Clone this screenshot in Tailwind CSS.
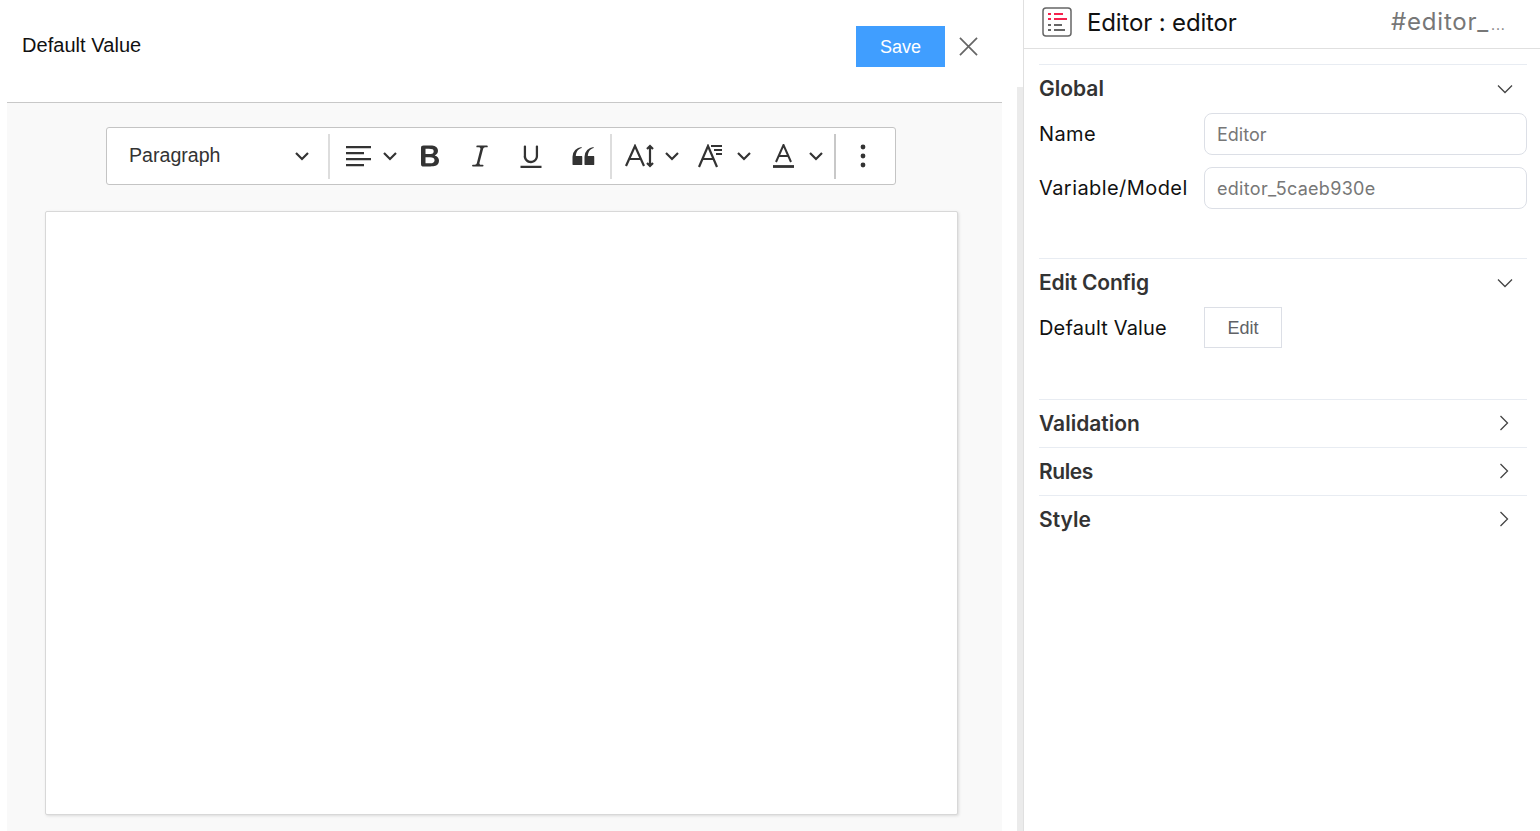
<!DOCTYPE html>
<html lang="en">
<head>
    <meta charset="UTF-8">
    <title>Default Value</title>
    <script src="https://cdn.jsdelivr.net/npm/@tailwindcss/browser@4"></script>
</head>
<body class="bg-white overflow-hidden">
<div class="flex h-[831px] w-[1540px] overflow-hidden">
    <!-- dialog -->
    <div class="w-[995px] ml-[7px] shrink-0 flex flex-col font-['Liberation_Sans',Arial,sans-serif]">
        <div class="h-[103px] shrink-0 border-b border-[#c8c8c8] flex items-start">
            <div class="ml-[15px] mt-[33px] text-[20px] leading-[24px] text-[#111] tracking-[0.05px]">Default Value</div>
            <button class="ml-auto mt-[26px] w-[89px] h-[41px] pt-[1px] bg-[#409eff] text-white text-[18px] flex items-center justify-center">Save</button>
            <svg class="mt-[37px] ml-[14px] mr-[24px]" width="19" height="19" viewBox="0 0 20 20" fill="none" stroke="#666" stroke-width="1.8"><path d="M1 1l18 18M19 1L1 19"/></svg>
        </div>
        <div class="flex-1 bg-[#f9f9f9] flex flex-col">
            <!-- toolbar -->
            <div class="ml-[99px] mt-[24px] w-[790px] h-[58px] bg-white border border-[#c4c4c4] rounded-[3px] flex items-center text-[#333]">
                <span class="ml-[22px] -mt-[1px] w-[166px] text-[19.6px] text-[#333]">Paragraph</span>
                <svg width="14" height="10" viewBox="0 0 14 10" fill="none" stroke="#333" stroke-width="2.2"><path d="M1 2l6 6 6-6"/></svg>
                <div class="ml-[19px] w-[2px] h-[45px] bg-[#ddd]"></div>
                <svg class="ml-[16px]" width="25" height="21" viewBox="0 0 25 21" fill="#333"><path d="M0 0h25v2.2H0zM0 6h18v2.2H0zM0 12h25v2.2H0zM0 18h18v2.2H0z"/></svg>
                <svg class="ml-[12px]" width="14" height="10" viewBox="0 0 14 10" fill="none" stroke="#333" stroke-width="2.2"><path d="M1 2l6 6 6-6"/></svg>
                <svg class="ml-[18px]" width="30" height="30" viewBox="0 0 20 20" fill="#333"><path d="M10.187 17H5.773c-.637 0-1.092-.138-1.364-.415-.273-.277-.409-.718-.409-1.323V4.738c0-.617.14-1.062.419-1.332.279-.27.73-.406 1.354-.406h4.68c.69 0 1.288.041 1.793.124.506.083.96.242 1.36.478.341.197.644.447.906.75a3.262 3.262 0 0 1 .808 2.162c0 1.401-.722 2.426-2.167 3.075C15.05 10.175 16 11.315 16 13.01a3.756 3.756 0 0 1-2.296 3.504 6.1 6.1 0 0 1-1.517.377c-.571.073-1.238.11-2 .11zm-.217-6.217H7v4.087h3.069c1.977 0 2.965-.69 2.965-2.072 0-.707-.256-1.22-.768-1.537-.512-.319-1.277-.478-2.296-.478zM7 5.13v3.619h2.606c.729 0 1.292-.067 1.69-.2a1.6 1.6 0 0 0 .91-.765c.165-.267.247-.566.247-.897 0-.707-.26-1.176-.778-1.409-.519-.232-1.31-.348-2.375-.348H7z"/></svg>
                <svg class="ml-[20px]" width="30" height="30" viewBox="0 0 20 20" fill="#333"><path d="m9.586 14.633.021.004c-.036.335.095.655.393.962.082.083.173.15.274.201h1.474a.6.6 0 1 1 0 1.2H5.304a.6.6 0 0 1 0-1.2h1.15c.474-.07.809-.182 1.005-.334.157-.122.291-.32.404-.597l2.416-9.55a1.053 1.053 0 0 0-.281-.823 1.12 1.12 0 0 0-.442-.296H8.15a.6.6 0 0 1 0-1.2h6.443a.6.6 0 1 1 0 1.2h-1.195c-.376.056-.65.155-.823.296-.215.175-.383.439-.504.79l-2.486 9.547z"/></svg>
                <svg class="ml-[21px]" width="30" height="30" viewBox="0 0 20 20" fill="#333"><path d="M3 18v-1.5h14V18zM5.2 10V3.6c0-.4.4-.6.8-.6.3 0 .7.2.7.6V10c0 1.8 1.5 3.2 3.3 3.2 1.7 0 3.2-1.4 3.2-3.2V3.6c0-.4.4-.6.8-.6.3 0 .7.2.7.6V10c0 2.6-2.2 4.8-4.8 4.8-2.7 0-4.8-2.1-4.8-4.8z"/></svg>
                <svg class="ml-[22px]" width="30" height="30" viewBox="0 0 20 20" fill="#333"><path d="M3 10.423a6.5 6.5 0 0 1 6.056-6.408l.038.67C6.448 5.423 5.354 7.663 5.22 10H9c.552 0 .5.432.5.986v4.511c0 .554-.448.503-1 .503h-5c-.552 0-.5-.449-.5-1.003v-4.574zm8 0a6.5 6.5 0 0 1 6.056-6.408l.038.67c-2.646.739-3.74 2.979-3.873 5.315H17c.552 0 .5.432.5.986v4.511c0 .554-.448.503-1 .503h-5c-.552 0-.5-.449-.5-1.003v-4.574z"/></svg>
                <div class="ml-[12px] w-[2px] h-[45px] bg-[#ddd]"></div>
                <svg class="ml-[13px]" width="30" height="24" viewBox="0 0 30 24" fill="none" stroke="#333" stroke-width="2.2"><path d="M1 22L10 2l9 20M4.5 15h11"/><path d="M25 2v20M22 5l3-3 3 3M22 19l3 3 3-3"/></svg>
                <svg class="ml-[10px]" width="14" height="10" viewBox="0 0 14 10" fill="none" stroke="#333" stroke-width="2.2"><path d="M1 2l6 6 6-6"/></svg>
                <svg class="ml-[19px]" width="25" height="24" viewBox="0 0 25 24" fill="none" stroke="#333" stroke-width="2.2"><path d="M1 23L10 2l9 21M4.5 15h11"/><path d="M13 2h11M16 6h8M18 10h6" stroke-width="1.8"/></svg>
                <svg class="ml-[14px]" width="14" height="10" viewBox="0 0 14 10" fill="none" stroke="#333" stroke-width="2.2"><path d="M1 2l6 6 6-6"/></svg>
                <svg class="ml-[22px]" width="21" height="24" viewBox="0 0 21 24" fill="none" stroke="#333" stroke-width="2"><path d="M3 18L10.5 1 18 18M5.5 12h10"/><path d="M0 22.5h21" stroke-width="2.8"/></svg>
                <svg class="ml-[15px]" width="14" height="10" viewBox="0 0 14 10" fill="none" stroke="#333" stroke-width="2.2"><path d="M1 2l6 6 6-6"/></svg>
                <div class="ml-[11px] w-[2px] h-[45px] bg-[#c8c8c8]"></div>
                <svg class="ml-[22px]" width="10" height="24" viewBox="0 0 10 24" fill="#333"><circle cx="5" cy="3" r="2.4"/><circle cx="5" cy="12" r="2.4"/><circle cx="5" cy="21" r="2.4"/></svg>
            </div>
            <!-- editable area -->
            <div class="ml-[38px] mt-[26px] w-[913px] h-[604px] bg-white border border-[#d8d8d8] rounded-[2px] shadow-[1px_1px_3px_rgba(0,0,0,0.12)]"></div>
        </div>
    </div>
    <!-- scrollbar -->
    <div class="ml-[15px] mt-[87px] w-[6px] shrink-0 bg-[#ebebeb]"></div>
    <!-- properties panel -->
    <div class="flex-1 border-l border-[#e0e0e0] flex flex-col font-['Inter',sans-serif]">
        <div class="h-[49px] shrink-0 border-b border-[#e0e0e0] flex items-center">
            <svg class="ml-[18px] -mt-[4px]" width="30" height="30" viewBox="0 0 30 30" fill="none">
                <rect x="1" y="1" width="28" height="28" rx="3" stroke="#666" stroke-width="1.5"/>
                <path d="M6 7h3M12 7h9M6 12h3M12 12h13" stroke="#f5224d" stroke-width="1.8"/>
                <path d="M6 18h3M12 18h8M6 23h3M12 23h11" stroke="#666" stroke-width="1.8"/>
            </svg>
            <span class="ml-[15px] -mt-[3px] text-[24px] leading-[30px] text-[#111] tracking-[-0.15px]">Editor : editor</span>
            <span class="ml-auto mr-[35px] -mt-[2px] w-[114px] whitespace-nowrap text-[24px] leading-[30px] tracking-[0.8px] text-[#777]">#editor_<span class="ml-[2px] text-[14px]">...</span></span>
        </div>
        <div class="ml-[15px] mr-[13px] flex flex-col">
            <div class="mt-[15px] h-[194px] border-t border-[#e8ecf2]">
                <div class="h-[47px] flex items-center justify-between">
                    <span class="text-[21px] font-semibold text-[#333]">Global</span>
                    <svg class="mr-[14px]" width="16" height="10" viewBox="0 0 16 10" fill="none" stroke="#444" stroke-width="1.3"><path d="M1 1.5l7 7 7-7"/></svg>
                </div>
                <div class="h-[42px] mt-[1px] flex items-center">
                    <label class="w-[165px] text-[20px] text-[#111] tracking-[0.4px]">Name</label>
                    <div class="flex-1 h-[42px] pt-[1px] border border-[#dcdfe6] rounded-[8px] flex items-center px-[12px] text-[18px] text-[#777]">Editor</div>
                </div>
                <div class="h-[42px] mt-[12px] flex items-center">
                    <label class="w-[165px] text-[20px] text-[#111] tracking-[0.43px] whitespace-nowrap">Variable/Model</label>
                    <div class="flex-1 h-[42px] pt-[1px] border border-[#dcdfe6] rounded-[8px] flex items-center px-[12px] text-[18px] tracking-[0.3px] text-[#777]">editor_5caeb930e</div>
                </div>
            </div>
            <div class="h-[141px] border-t border-[#e8ecf2]">
                <div class="h-[47px] pt-[1px] flex items-center justify-between">
                    <span class="text-[21px] font-semibold text-[#333] tracking-[-0.2px]">Edit Config</span>
                    <svg class="mr-[14px]" width="16" height="10" viewBox="0 0 16 10" fill="none" stroke="#444" stroke-width="1.3"><path d="M1 1.5l7 7 7-7"/></svg>
                </div>
                <div class="h-[41px] mt-[1px] flex items-center">
                    <label class="w-[165px] text-[20px] text-[#111] tracking-[0.15px]">Default Value</label>
                    <button class="w-[78px] h-[41px] pt-[1px] border border-[#dcdfe6] text-[18px] text-[#606266] font-['Liberation_Sans',Arial,sans-serif]">Edit</button>
                </div>
            </div>
            <div class="h-[48px] border-t border-[#e8ecf2] flex items-center justify-between">
                <span class="text-[21px] font-semibold text-[#333]">Validation</span>
                <svg class="mr-[18px] -mt-[1px]" width="10" height="16" viewBox="0 0 10 16" fill="none" stroke="#444" stroke-width="1.3"><path d="M1.5 1l7 7-7 7"/></svg>
            </div>
            <div class="h-[48px] border-t border-[#e8ecf2] flex items-center justify-between">
                <span class="text-[21px] font-semibold text-[#333] tracking-[-0.4px]">Rules</span>
                <svg class="mr-[18px] -mt-[1px]" width="10" height="16" viewBox="0 0 10 16" fill="none" stroke="#444" stroke-width="1.3"><path d="M1.5 1l7 7-7 7"/></svg>
            </div>
            <div class="h-[48px] border-t border-[#e8ecf2] flex items-center justify-between">
                <span class="text-[21px] font-semibold text-[#333]">Style</span>
                <svg class="mr-[18px] -mt-[1px]" width="10" height="16" viewBox="0 0 10 16" fill="none" stroke="#444" stroke-width="1.3"><path d="M1.5 1l7 7-7 7"/></svg>
            </div>
        </div>
    </div>
</div>
</body>
</html>
